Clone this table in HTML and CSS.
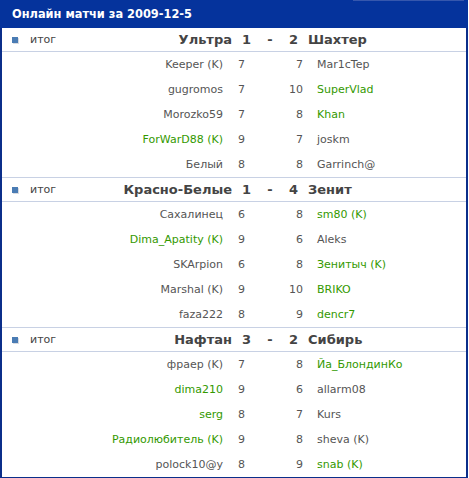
FILE: index.html
```html
<!DOCTYPE html>
<html lang="ru">
<head>
<meta charset="utf-8">
<title>Онлайн матчи</title>
<link rel="stylesheet" href="styles.css">
</head>
<body>
<div class="panel">
  <div class="title">Онлайн матчи за 2009-12-5</div>

  <section class="match">
    <div class="head">
      <span class="result"><i class="bullet"></i>итог</span>
      <span class="team1">Ультра</span><span class="s1">1</span><span class="dash">-</span><span class="s2">2</span><span class="team2">Шахтер</span>
    </div>
    <div class="row"><span class="p1">Keeper (K)</span><span class="g1">7</span><span class="g2">7</span><span class="p2">Mar1cTep</span></div>
    <div class="row"><span class="p1">gugromos</span><span class="g1">7</span><span class="g2">10</span><span class="p2 on">SuperVlad</span></div>
    <div class="row"><span class="p1">Morozko59</span><span class="g1">7</span><span class="g2">8</span><span class="p2 on">Khan</span></div>
    <div class="row"><span class="p1 on">ForWarD88 (K)</span><span class="g1">9</span><span class="g2">7</span><span class="p2">joskm</span></div>
    <div class="row"><span class="p1">Белый</span><span class="g1">8</span><span class="g2">8</span><span class="p2">Garrinch@</span></div>
  </section>

  <section class="match">
    <div class="head">
      <span class="result"><i class="bullet"></i>итог</span>
      <span class="team1">Красно-Белые</span><span class="s1">1</span><span class="dash">-</span><span class="s2">4</span><span class="team2">Зенит</span>
    </div>
    <div class="row"><span class="p1">Сахалинец</span><span class="g1">6</span><span class="g2">8</span><span class="p2 on">sm80 (K)</span></div>
    <div class="row"><span class="p1 on">Dima_Apatity (K)</span><span class="g1">9</span><span class="g2">6</span><span class="p2">Aleks</span></div>
    <div class="row"><span class="p1">SKArpion</span><span class="g1">6</span><span class="g2">8</span><span class="p2 on">Зенитыч (K)</span></div>
    <div class="row"><span class="p1">Marshal (K)</span><span class="g1">9</span><span class="g2">10</span><span class="p2 on">BRIKO</span></div>
    <div class="row"><span class="p1">faza222</span><span class="g1">8</span><span class="g2">9</span><span class="p2 on">dencr7</span></div>
  </section>

  <section class="match">
    <div class="head">
      <span class="result"><i class="bullet"></i>итог</span>
      <span class="team1">Нафтан</span><span class="s1">3</span><span class="dash">-</span><span class="s2">2</span><span class="team2">Сибирь</span>
    </div>
    <div class="row"><span class="p1">фраер (K)</span><span class="g1">7</span><span class="g2">8</span><span class="p2 on">Йа_БлондинКо</span></div>
    <div class="row"><span class="p1 on">dima210</span><span class="g1">9</span><span class="g2">6</span><span class="p2">allarm08</span></div>
    <div class="row"><span class="p1 on">serg</span><span class="g1">8</span><span class="g2">7</span><span class="p2">Kurs</span></div>
    <div class="row"><span class="p1 on">Радиолюбитель (K)</span><span class="g1">9</span><span class="g2">8</span><span class="p2">sheva (K)</span></div>
    <div class="row"><span class="p1">polock10@y</span><span class="g1">8</span><span class="g2">9</span><span class="p2 on">snab (K)</span></div>
  </section>
</div>
</body>
</html>
```

FILE: styles.css
```css
html, body {
  margin: 0;
  padding: 0;
  background: #ffffff;
}

body {
  font-family: "DejaVu Sans", Verdana, sans-serif;
  font-size: 11px;
  color: #555555;
}

.panel {
  width: 468px;
  box-sizing: border-box;
  border: 2px solid #0b2e8a;
  border-top: 0;
}

.title {
  position: relative;
  height: 28px;
  line-height: 28px;
  margin: 0 -2px;
  padding-left: 12px;
  background: #05339c;
  color: #ffffff;
  font-weight: bold;
  font-size: 11.4px;
}

.title::after {
  content: "";
  position: absolute;
  top: 0;
  left: 353px;
  width: 111px;
  height: 1px;
  background: #3657ad;
}

.match + .match {
  border-top: 1px solid #c8d1e4;
}

.head {
  display: grid;
  grid-template-columns: 118px 112px 30px 16px 20px 1fr;
  align-items: center;
  height: 23px;
  border-bottom: 1px solid #c8d1e4;
  color: #444444;
  font-weight: bold;
  font-size: 13px;
}

.result {
  display: flex;
  align-items: center;
  gap: 12px;
  padding-left: 10px;
  font-weight: normal;
  font-size: 11px;
  color: #444444;
}

.bullet {
  display: block;
  width: 6px;
  height: 6px;
  background: #4a7cb4;
  box-shadow: 1px 1px 0 #d8dbe0;
}

.team1 { text-align: right; }
.s1 { padding-left: 10px; }
.dash { text-align: center; }
.s2 { text-align: right; }
.team2 { padding-left: 10px; }

.row {
  display: grid;
  grid-template-columns: 221px 48px 32px 1fr;
  align-items: center;
  height: 25px;
}

.p1 { text-align: right; }
.g1 { padding-left: 15px; }
.g2 { text-align: right; }
.p2 { padding-left: 14px; }

.on { color: #339900; }
```
